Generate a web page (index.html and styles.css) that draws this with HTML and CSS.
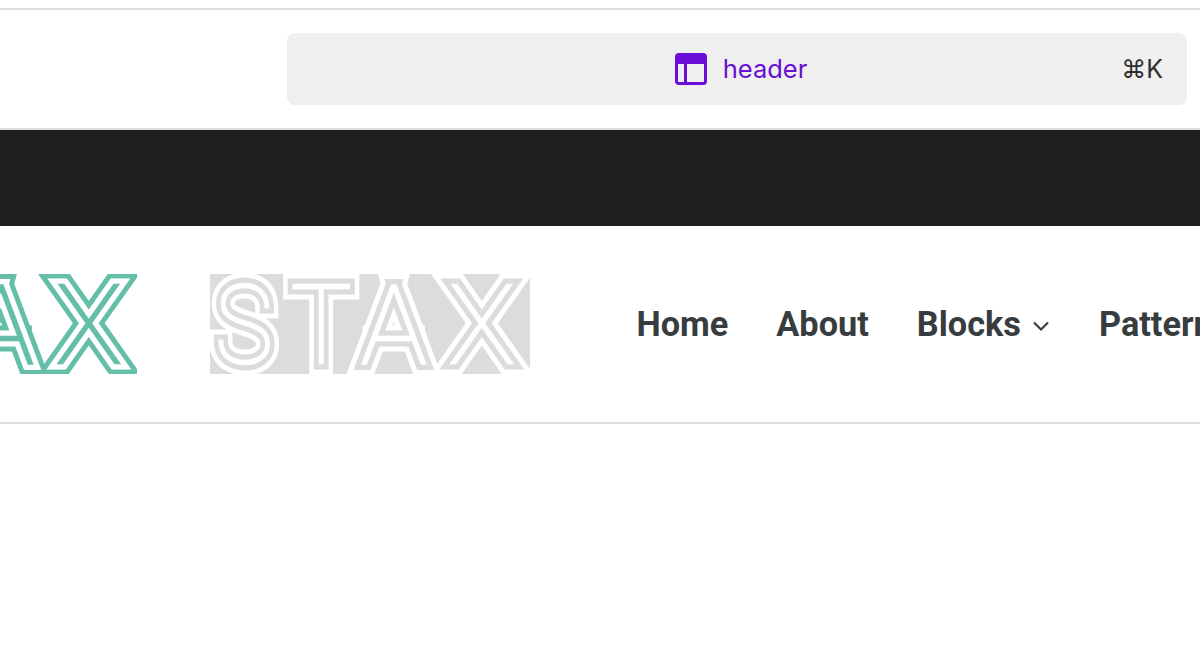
FILE: index.html
```html
<!DOCTYPE html>
<html lang="en">
<head>
<meta charset="utf-8">
<title>Header</title>
<link rel="stylesheet" href="styles.css">
</head>
<body>
<div class="toolbar">
  <div class="search">
    <div class="search-label">
      <svg class="block-icon" viewBox="0 0 32 32" aria-hidden="true">
        <rect x="1.5" y="1.5" width="29" height="29" rx="2.5" fill="none" stroke="#6a0dd6" stroke-width="3"/>
        <rect x="1" y="1" width="30" height="10" fill="#6a0dd6"/>
        <rect x="9" y="10" width="3" height="20" fill="#6a0dd6"/>
      </svg>
      <span class="search-text">header</span>
    </div>
    <span class="shortcut">⌘K</span>
  </div>
</div>
<div class="dark-bar"></div>
<header class="site-header">
  <div class="logo logo-teal">
    <svg viewBox="0 0 320 100" aria-label="STAX">
      <defs>
        <g id="wordmark" class="word">
          <text transform="translate(5 89) scale(.89 1)">S</text>
          <text transform="translate(81 89) scale(.92 1)">T</text>
          <text transform="translate(151 89)">A</text>
          <text transform="translate(239 89)">X</text>
        </g>
      </defs>
      <use href="#wordmark" class="band-a"/>
      <use href="#wordmark" class="band-b"/>
      <use href="#wordmark" class="band-c"/>
    </svg>
  </div>
  <div class="logo logo-grey">
    <svg viewBox="0 0 320 100" aria-label="STAX">
      <use href="#wordmark" class="band-a"/>
      <use href="#wordmark" class="band-b"/>
      <use href="#wordmark" class="band-c"/>
    </svg>
  </div>
  <nav class="nav">
    <a class="nav-item">Home</a>
    <a class="nav-item">About</a>
    <a class="nav-item has-sub">Blocks
      <svg class="chevron" viewBox="0 0 18 12" aria-hidden="true"><path d="M2 2.5 9 9.5 16 2.5" fill="none" stroke="#373c3f" stroke-width="2.2"/></svg>
    </a>
    <a class="nav-item">Patterns</a>
  </nav>
</header>
</body>
</html>
```
FILE: styles.css
```css
* { box-sizing: border-box; }
html, body { margin: 0; padding: 0; background: #fff; }
body { width: 1200px; height: 658px; overflow: hidden; padding-top: 8px; font-family: "Roboto", "Liberation Sans", sans-serif; }

.toolbar {
  height: 122px;
  border-top: 2px solid #dcdcdc;
  border-bottom: 2px solid #dcdcdc;
  padding: 23px 13px 0 287px;
}
.search {
  position: relative;
  height: 72px;
  background: #efefef;
  border-radius: 8px;
  display: flex;
  align-items: center;
  justify-content: center;
  font-family: "Inter", "Liberation Sans", sans-serif;
}
.search-label { display: flex; align-items: center; gap: 16px; margin-left: 8px; }
.block-icon { width: 32px; height: 32px; display: block; }
.search-text { font-size: 25.5px; line-height: 32px; color: #6a0dd6; }
.shortcut {
  position: absolute;
  right: 24px;
  top: 20px;
  font-size: 25px;
  line-height: 32px;
  color: #2f2f2f;
}

.dark-bar { height: 96px; background: #1e1e1e; }

.site-header {
  height: 198px;
  border-bottom: 2px solid #dcdcdc;
  display: flex;
  align-items: center;
  margin-left: -183px;
  width: 1383px;
  overflow: hidden;
}
.logo { flex: 0 0 320px; height: 100px; margin-top: -1px; }
.logo svg { display: block; width: 320px; height: 100px; overflow: hidden; }
.logo-grey { margin-left: 73px; background: #dcdcdc; }

.word {
  font-family: "Roboto", "Liberation Sans", sans-serif;
  font-weight: 100;
  font-size: 110px;
  stroke-linejoin: miter;
  stroke-miterlimit: 6;
}
.band-a { stroke-width: 23px; }
.band-b { stroke-width: 13px; }
.band-c { stroke-width: 2.5px; }
.logo-teal .band-a { fill: #65bfa8; stroke: #65bfa8; }
.logo-teal .band-b { fill: #fff; stroke: #fff; }
.logo-teal .band-c { fill: #65bfa8; stroke: #65bfa8; }
.logo-grey .band-a { fill: #fff; stroke: #fff; }
.logo-grey .band-b { fill: #dcdcdc; stroke: #dcdcdc; }
.logo-grey .band-c { fill: #fff; stroke: #fff; }

.nav { display: flex; align-items: center; gap: 48px; margin-left: 106.5px; flex: none; }
.nav-item { font-size: 34.3px; font-weight: 700; line-height: 40px; color: #373c3f; white-space: nowrap; display: flex; align-items: center; }
.chevron { width: 18px; height: 12px; margin-left: 11px; margin-right: 1px; margin-top: 4px; flex: none; }
```
